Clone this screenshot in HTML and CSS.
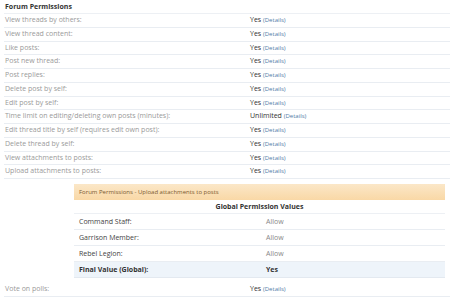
FILE: index.html
```html
<!DOCTYPE html>
<html lang="en">

<head>
  <meta charset="UTF-8">
  <title>Forum Permissions</title>
  <link rel="stylesheet" href="styles.css">
</head>

<body>
  <div class="perms">
    <h3 class="perms-title">Forum Permissions</h3>

    <div class="perm-row"><span class="perm-label">View threads by others:</span><span class="perm-value">Yes <a href="#">(Details)</a></span></div>
    <div class="perm-row"><span class="perm-label">View thread content:</span><span class="perm-value">Yes <a href="#">(Details)</a></span></div>
    <div class="perm-row"><span class="perm-label">Like posts:</span><span class="perm-value">Yes <a href="#">(Details)</a></span></div>
    <div class="perm-row"><span class="perm-label">Post new thread:</span><span class="perm-value">Yes <a href="#">(Details)</a></span></div>
    <div class="perm-row"><span class="perm-label">Post replies:</span><span class="perm-value">Yes <a href="#">(Details)</a></span></div>
    <div class="perm-row"><span class="perm-label">Delete post by self:</span><span class="perm-value">Yes <a href="#">(Details)</a></span></div>
    <div class="perm-row"><span class="perm-label">Edit post by self:</span><span class="perm-value">Yes <a href="#">(Details)</a></span></div>
    <div class="perm-row"><span class="perm-label">Time limit on editing/deleting own posts (minutes):</span><span class="perm-value">Unlimited <a href="#">(Details)</a></span></div>
    <div class="perm-row"><span class="perm-label">Edit thread title by self (requires edit own post):</span><span class="perm-value">Yes <a href="#">(Details)</a></span></div>
    <div class="perm-row"><span class="perm-label">Delete thread by self:</span><span class="perm-value">Yes <a href="#">(Details)</a></span></div>
    <div class="perm-row"><span class="perm-label">View attachments to posts:</span><span class="perm-value">Yes <a href="#">(Details)</a></span></div>
    <div class="perm-row"><span class="perm-label">Upload attachments to posts:</span><span class="perm-value">Yes <a href="#">(Details)</a></span></div>

    <!-- expanded details -->
    <div class="details-box">
      <div class="details-head">Forum Permissions - Upload attachments to posts</div>
      <div class="details-title">Global Permission Values</div>
      <div class="detail-row"><span class="detail-label">Command Staff:</span><span class="detail-value">Allow</span></div>
      <div class="detail-row"><span class="detail-label">Garrison Member:</span><span class="detail-value">Allow</span></div>
      <div class="detail-row"><span class="detail-label">Rebel Legion:</span><span class="detail-value">Allow</span></div>
      <div class="detail-row final"><span class="detail-label">Final Value (Global):</span><span class="detail-value">Yes</span></div>
    </div>

    <div class="perm-row"><span class="perm-label">Vote on polls:</span><span class="perm-value">Yes <a href="#">(Details)</a></span></div>
  </div>
</body>

</html>
```

FILE: styles.css
```css
* {
  margin: 0;
  padding: 0;
  box-sizing: border-box;
}

body {
  background-color: #ffffff;
  font-family: 'Open Sans', sans-serif;
  font-size: 7px;
  color: #333;
}

.perms {
  padding-left: 4px;
}

.perms-title {
  height: 14px;
  line-height: 13px;
  padding-left: 1px;
  font-size: 7px;
  font-weight: 700;
  color: #333;
  border-bottom: 1px solid #edf0f4;
}

.perm-row {
  display: flex;
  height: 13.75px;
  line-height: 12.75px;
  border-bottom: 1px solid #e9edf2;
}

.perm-label {
  width: 246px;
  padding-left: 1px;
  color: #9a9a9a;
}

.perm-value {
  color: #333;
}

.perm-value a {
  color: #4f7ba6;
  text-decoration: none;
  font-size: 6px;
}

/* Details box */
.details-box {
  margin: 5px 5px 5px 70px;
}

.details-head {
  height: 16px;
  line-height: 16px;
  padding-left: 5px;
  font-size: 6px;
  color: #7a5a30;
  background: linear-gradient(to bottom, #fbe7c8, #f9d8a6);
}

.details-title {
  height: 14px;
  line-height: 14px;
  text-align: center;
  font-weight: 700;
  color: #333;
  border-bottom: 1px solid #edf0f4;
}

.detail-row {
  display: flex;
  height: 16px;
  line-height: 15px;
  border-bottom: 1px solid #e9edf2;
}

.detail-label {
  width: 192px;
  padding-left: 5px;
  color: #444;
}

.detail-value {
  color: #888;
}

.detail-row.final {
  background-color: #eef4fa;
  border-bottom: 1px solid #e3e9f0;
}

.detail-row.final .detail-label,
.detail-row.final .detail-value {
  font-weight: 700;
  color: #333;
}
```
